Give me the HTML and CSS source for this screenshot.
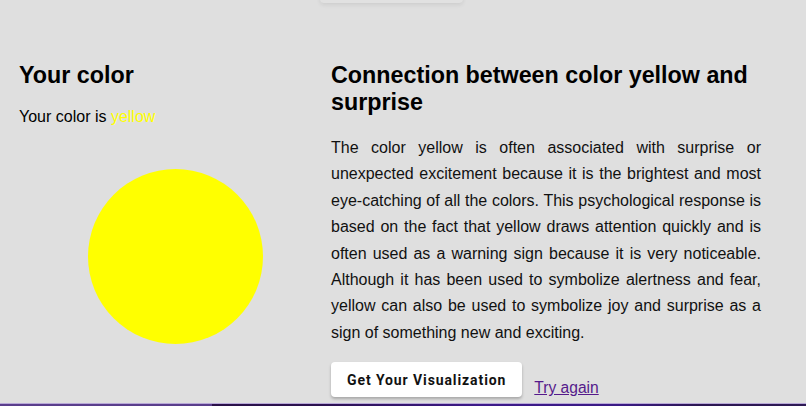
FILE: index.html
```html
<!DOCTYPE html>
<html lang="en">
<head>
<meta charset="utf-8">
<title>Your color</title>
<link rel="stylesheet" href="styles.css">
</head>
<body>
<div class="top-tab"></div>
<main class="result">
  <section class="col-left">
    <h2 class="title">Your color</h2>
    <p class="your-color">Your color is <span class="color-name">yellow</span></p>
    <div class="swatch-wrap"><div class="swatch"></div></div>
  </section>
  <section class="col-right">
    <h2 class="title">Connection between color yellow and surprise</h2>
    <p class="desc">The color yellow is often associated with surprise or unexpected excitement because it is the brightest and most eye-catching of all the colors. This psychological response is based on the fact that yellow draws attention quickly and is often used as a warning sign because it is very noticeable. Although it has been used to symbolize alertness and fear, yellow can also be used to symbolize joy and surprise as a sign of something new and exciting.</p>
    <div class="actions">
      <button class="btn">Get Your Visualization</button>
      <a class="retry" href="#">Try again</a>
    </div>
  </section>
</main>
<footer class="footer"></footer>
</body>
</html>
```

FILE: styles.css
```css
html, body {
  margin: 0;
  padding: 0;
}
body {
  background: #dfdfdf;
  font-family: "Liberation Sans", Arial, sans-serif;
  color: #000;
  height: 406px;
  overflow: hidden;
}
.top-tab {
  width: 143px;
  height: 30px;
  margin: -27px 0 0 320px;
  background: #e1e1e1;
  box-shadow: 0 2px 4px rgba(0, 0, 0, 0.08);
  border-radius: 4px;
}
.result {
  display: grid;
  grid-template-columns: 312px 430px;
  padding: 59px 0 0 19px;
}
.title {
  font-size: 23.3px;
  font-weight: bold;
  margin: 0;
  line-height: 27px;
}
.your-color {
  font-size: 16px;
  margin: 19px 0 0;
  line-height: 18px;
}
.color-name {
  color: #ffff00;
}
.swatch-wrap {
  display: flex;
  justify-content: center;
  padding-top: 43px;
}
.swatch {
  width: 175px;
  height: 175px;
  border-radius: 50%;
  background: #ffff00;
}
.desc {
  font-size: 16px;
  line-height: 26.4px;
  text-align: justify;
  margin: 19px 0 0;
  color: #111;
}
.actions {
  display: flex;
  align-items: flex-end;
  gap: 12px;
  margin-top: 16px;
}
.btn {
  font-family: Roboto, "Liberation Sans", sans-serif;
  font-weight: 700;
  font-size: 14px;
  letter-spacing: 0.9px;
  color: #111;
  background: #fff;
  border: none;
  border-radius: 4px;
  height: 35px;
  padding: 0 16px;
  box-shadow: 0 2px 3px rgba(0, 0, 0, 0.25);
}
.retry {
  font-size: 15.6px;
  line-height: 18px;
  color: #551a8b;
  text-decoration: underline;
}
.footer {
  margin-top: 6px;
  height: 40px;
  border-top: 1px solid #b8a8d8;
  background: linear-gradient(to right, #5a3e8c 0, #5a3e8c 212px, #2a1048 212px, #2c1150 320px, #3d1a8a 480px, #3a1a85 620px, #2c1652 700px, #2e1a55 806px);
}
```
